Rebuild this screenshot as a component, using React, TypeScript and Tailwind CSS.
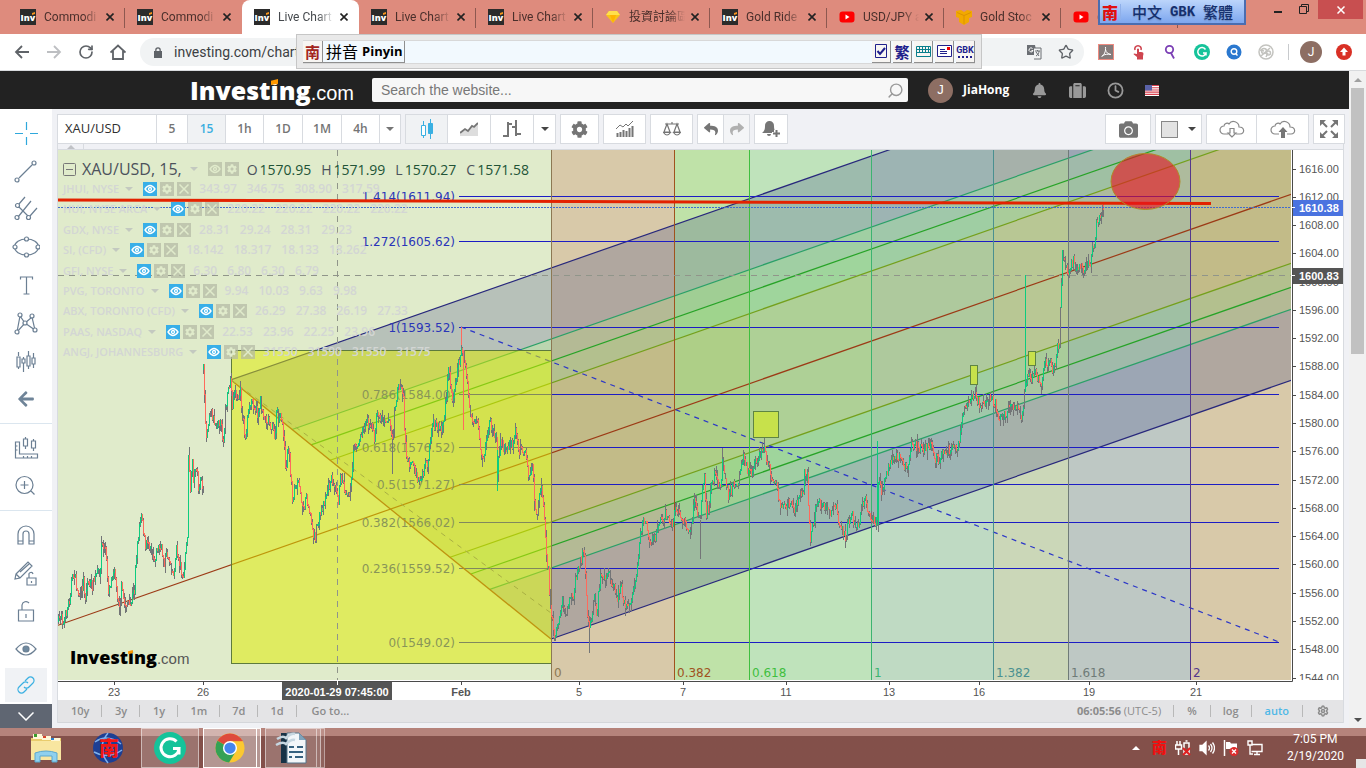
import type { ReactNode } from 'react';
import { Clock, RotateCw, Search, Settings, Star } from 'lucide-react';
import { FaArrowLeft, FaBell, FaCamera, FaCog, FaReply, FaShare, FaSuitcase } from 'react-icons/fa';

const UI = "font-['Open_Sans','Noto_Sans_CJK_SC',sans-serif]";

/* ---------- chart data ---------- */

// price path in chart units, one list per uninterrupted run
const RUNS: number[][] = [
  [58, 622, 61, 613, 63, 625, 66, 612, 69, 600, 71, 582, 74, 574, 77, 592, 80, 597, 83, 581, 85, 598, 87, 582, 92, 586, 96, 575, 100, 570, 101, 545, 105, 550, 108, 590, 112, 575, 114, 565, 116, 590, 119, 603, 121, 588, 124, 605, 128, 603, 129, 610, 132, 597, 134, 590, 135, 565, 137, 545, 139, 525, 141, 510, 143, 530, 145, 550, 147, 540, 150, 545, 154, 560, 157, 548, 161, 550, 164, 562, 167, 555, 170, 562, 173, 577, 176, 550, 179, 562, 182, 575, 183, 583, 185, 555, 187, 535, 188, 460, 190, 490, 192, 465, 193, 478, 196, 465, 198, 487, 200, 483, 203, 488],
  [203, 370, 204, 400, 206, 438, 208, 420, 210, 408, 213, 420, 216, 425, 218, 417, 221, 430, 223, 440, 225, 410, 228, 393, 230, 380, 232, 405, 234, 390, 237, 400, 240, 393, 242, 415, 245, 440, 247, 420, 251, 400, 254, 405, 257, 415, 260, 402, 264, 418, 268, 420, 272, 430, 275, 438, 276, 410, 278, 418, 281, 420, 283, 432, 285, 472, 288, 445, 290, 470, 292, 500, 294, 490, 298, 485, 301, 500, 304, 505, 306, 495, 309, 510, 312, 530, 315, 537, 317, 525, 321, 510, 324, 500, 327, 490, 331, 480, 335, 482, 338, 500, 340, 480, 342, 478, 344, 490, 348, 492, 350, 490, 352, 470, 354, 440, 357, 447, 359, 442, 362, 430, 366, 420, 370, 425, 374, 438, 377, 410, 380, 420, 384, 418, 389, 420, 392, 440, 395, 402, 398, 388, 401, 386, 403, 400, 404, 430, 407, 465, 412, 458, 415, 475, 418, 480, 422, 478, 425, 465, 428, 460, 430, 440, 433, 425, 437, 425, 441, 430, 444, 415, 446, 398, 448, 368, 450, 385, 452, 402, 454, 385, 457, 370, 460, 355, 463, 348, 465, 370, 467, 382, 468, 400, 470, 415, 473, 422, 477, 422, 480, 455, 483, 462, 486, 440, 489, 420, 492, 430, 496, 440, 497, 472, 500, 440, 504, 450, 508, 445, 512, 445, 515, 430, 518, 450, 521, 450, 525, 455, 529, 480, 532, 465, 534, 500, 537, 520, 539, 490, 541, 490, 544, 520, 546, 560, 548, 570, 550, 610, 552, 620, 554, 636, 558, 622, 562, 600, 565, 615, 568, 610, 570, 595, 572, 602, 576, 575, 580, 560, 584, 552, 585, 575, 587, 620, 589, 630, 592, 615, 594, 592, 596, 618, 599, 585, 601, 572, 604, 575, 608, 575, 612, 585, 615, 590, 617, 598, 621, 585, 623, 602, 629, 608, 632, 595, 637, 565, 640, 530, 644, 520, 647, 530, 649, 543, 652, 535, 655, 540, 658, 525, 662, 518, 666, 515, 668, 520, 672, 525, 674, 510, 678, 515, 684, 520, 687, 535, 691, 525, 694, 502, 697, 512, 700, 520, 702, 490, 704, 480, 706, 515, 709, 505, 712, 480, 715, 473, 720, 490, 722, 463, 725, 478, 728, 495, 731, 490, 734, 485, 737, 488, 740, 475, 743, 460, 746, 467, 750, 475, 754, 465, 758, 460, 762, 450, 765, 452, 767, 465, 771, 475, 776, 485, 779, 500, 782, 507, 786, 505, 790, 503, 794, 512, 797, 500, 800, 495, 803, 490, 804, 470, 807, 478, 808, 510, 810, 538, 813, 520, 817, 505, 822, 505, 826, 505, 829, 515, 832, 508, 836, 507, 839, 525, 842, 530, 845, 540, 848, 520, 852, 515, 855, 530, 859, 525, 862, 500, 865, 502, 868, 515, 872, 522, 877, 520, 878, 482, 882, 493, 886, 475, 890, 465, 895, 455, 900, 460, 904, 465, 908, 468, 911, 444, 915, 447, 920, 450, 926, 450, 931, 443, 935, 458, 939, 460, 942, 455, 947, 450, 952, 450, 957, 450, 960, 430, 963, 408, 966, 410, 970, 398, 976, 396, 980, 408, 985, 403, 990, 400, 995, 405, 998, 415, 1002, 418, 1008, 410, 1014, 408, 1018, 412, 1022, 415, 1024, 395, 1027, 378, 1030, 378, 1034, 374, 1038, 380, 1041, 385, 1044, 365, 1048, 362, 1052, 368, 1055, 370, 1057, 342, 1059, 350, 1060, 310, 1061, 280, 1062, 252, 1064, 262, 1067, 275, 1070, 268, 1073, 262, 1076, 272, 1080, 265, 1083, 270, 1087, 268, 1090, 262, 1092, 250, 1094, 245, 1096, 226, 1098, 225, 1100, 215, 1103, 208],
];

function buildCandles() {
  let wicks = '';
  let up = '';
  let down = '';
  let seed = 7;
  const rand = () => {
    seed = (seed * 16807) % 2147483647;
    return seed / 2147483647;
  };
  for (const run of RUNS) {
    let open = run[1];
    let k = 0;
    for (let x = run[0]; x <= run[run.length - 2]; x += 1) {
      while (k < run.length - 4 && run[k + 2] < x) k += 2;
      const t = (x - run[k]) / (run[k + 2] - run[k] || 1);
      const close = run[k + 1] + (run[k + 3] - run[k + 1]) * t + (rand() - 0.5) * 11;
      const high = Math.min(open, close) - rand() * rand() * 10;
      const low = Math.max(open, close) + rand() * rand() * 10;
      wicks += `M${x + 0.5} ${Math.round(high)}V${Math.round(low)}`;
      // some columns keep only their wick, so bodies read as separate bars
      if (rand() > 0.12) {
        const top = Math.round(Math.min(open, close));
        const body = `M${x + 0.5} ${top - 1}V${Math.max(Math.round(Math.max(open, close)), top + 1)}`;
        if (close < open) up += body;
        else down += body;
      }
      open = close;
    }
  }
  return { wicks, up, down };
}

const CANDLES = buildCandles();

const ZONES = [
  { x: 58, w: 493, fill: '#e0ebcb' },
  { x: 551, w: 123, fill: '#d8c9a9', line: '#8c7853', label: '0' },
  { x: 674, w: 75, fill: '#bfe2a8', line: '#a0521e', label: '0.382' },
  { x: 749, w: 122, fill: '#bfe3bb', line: '#3fbf3f', label: '0.618' },
  { x: 871, w: 122, fill: '#bfdac3', line: '#3cb371', label: '1' },
  { x: 993, w: 75, fill: '#cbd7b8', line: '#4a9090', label: '1.382' },
  { x: 1068, w: 122, fill: '#bec8c4', line: '#6f7b78', label: '1.618' },
  { x: 1190, w: 102, fill: '#d8c9a9', line: '#54388c', label: '2' },
];

// pitchfork levels, given by their height at x = 551
const SLOPE = 0.3495;
const levelY = (d: number, x: number) => d + SLOPE * (551 - x);
const levelStart = (d: number) => (d - 0.8) / 1.158;

const FORK = [
  { d: 268, color: '#28287c', band: 'rgba(35,45,125,.22)' },
  { d: 339, color: '#2ba068', band: 'rgba(40,130,70,.2)' },
  { d: 361, color: '#27a327', band: 'rgba(35,160,35,.2)' },
  { d: 383, color: '#74a01c', band: 'rgba(110,135,5,.2)' },
  { d: 453, color: '#9c3a16', band: 'rgba(110,135,5,.2)' },
  { d: 522, color: '#74a01c', band: 'rgba(35,160,35,.2)' },
  { d: 546, color: '#27a327', band: 'rgba(40,130,70,.2)' },
  { d: 568, color: '#2ba068', band: 'rgba(35,45,125,.22)' },
  { d: 639, color: '#28287c', band: '' },
];

const FIBS: [string, number][] = [
  ['1.414(1611.94)', 196],
  ['1.272(1605.62)', 241],
  ['1(1593.52)', 327],
  ['0.786(1584.00)', 394],
  ['0.618(1576.52)', 447],
  ['0.5(1571.27)', 484],
  ['0.382(1566.02)', 522],
  ['0.236(1559.52)', 568],
  ['0(1549.02)', 642],
];

const DATES: [string, number][] = [
  ['23', 114], ['26', 203], ['Feb', 461], ['5', 579], ['7', 683],
  ['11', 786], ['13', 889], ['16', 979], ['19', 1089], ['21', 1196],
];

const STUDIES = [
  { name: 'JHUI, NYSE', values: ['343.97', '346.75', '308.90', '317.59'] },
  { name: 'HUI, NYSE ARCA', values: ['220.22', '220.22', '220.22', '220.22'] },
  { name: 'GDX, NYSE', values: ['28.31', '29.24', '28.31', '29.23'] },
  { name: 'SI, (CFD)', values: ['18.142', '18.317', '18.133', '18.262'] },
  { name: 'GFI, NYSE', values: ['6.30', '6.80', '6.30', '6.79'] },
  { name: 'PVG, TORONTO', values: ['9.94', '10.03', '9.63', '9.98'] },
  { name: 'ABX, TORONTO (CFD)', values: ['26.29', '27.38', '26.19', '27.33'] },
  { name: 'PAAS, NASDAQ', values: ['22.53', '23.96', '22.25', '23.96'] },
  { name: 'ANGJ, JOHANNESBURG', values: ['31550', '31590', '31550', '31575'] },
];

/* ---------- small shapes ---------- */

function Caret({ className = '' }: { className?: string }) {
  return (
    <svg viewBox="0 0 8 4" className={`w-2 h-1 shrink-0 ${className}`} fill="currentColor">
      <path d="M0 0h8L4 4z" />
    </svg>
  );
}

function InvIcon() {
  return (
    <svg viewBox="0 0 16 16" className="w-4 h-4 shrink-0">
      <rect width="16" height="16" fill="#2b2b2b" />
      <text x="0.5" y="12" fontSize="9" fontWeight="800" fill="#fff" fontFamily="Open Sans">Inv</text>
      <path d="M12 4l3-1v2l-3 1z" fill="#f7941d" />
    </svg>
  );
}

function YoutubeIcon() {
  return (
    <svg viewBox="0 0 16 16" className="w-4 h-4 shrink-0">
      <rect x="0.5" y="2.5" width="15" height="11" rx="3" fill="#f00" />
      <path d="M6.5 5.5v5l4-2.5z" fill="#fff" />
    </svg>
  );
}

function GemIcon() {
  return (
    <svg viewBox="0 0 16 16" className="w-4 h-4 shrink-0">
      <path d="M4 2h8l3 4-7 8-7-8z" fill="#f9c517" />
      <path d="M4 2h8l3 4H1z" fill="#ffe04d" />
      <path d="M5 6h6l-3 8z" fill="#ffb400" />
    </svg>
  );
}

function GoldBoxIcon() {
  return (
    <svg viewBox="0 0 16 16" className="w-4 h-4 shrink-0">
      <path d="M0 2l5-1 3 2 3-2 5 1v6l-3 1v4l-5 3-5-3V9L0 8z" fill="#f2a900" />
      <path d="M1 3.500l7 3 7-3M8 6.500V15" stroke="#dd9200" strokeWidth="1" fill="none" />
    </svg>
  );
}

function Logo({ dark = false }: { dark?: boolean }) {
  return (
    <span className={`flex items-baseline leading-none ${dark ? 'text-black' : 'text-white'}`}>
      <span className={`font-extrabold font-['Open_Sans',sans-serif] ${dark ? 'text-[18px]' : 'text-[25px]'}`}>
        Invest
        <span className="relative">
          i
          <svg viewBox="0 0 6 5" className={`absolute left-0 ${dark ? 'top-[5px] w-[5px] h-1' : 'top-[6px] w-[7px] h-[6px]'}`}>
            <path d="M0 1.500l6-1.500v4l-6 1z" fill="#f90" />
          </svg>
        </span>
        ng
      </span>
      <span className={`font-['Liberation_Sans',sans-serif] ${dark ? 'text-[15px] text-[#555]' : 'text-[20px]'}`}>.com</span>
    </span>
  );
}

/* ---------- browser frame ---------- */

const TABS: { title: string; icon: ReactNode; active?: boolean; line?: boolean }[] = [
  { title: 'Commodi', icon: <InvIcon />, line: true },
  { title: 'Commodi', icon: <InvIcon /> },
  { title: 'Live Chart', icon: <InvIcon />, active: true },
  { title: 'Live Chart', icon: <InvIcon />, line: true },
  { title: 'Live Chart', icon: <InvIcon />, line: true },
  { title: '投資討論區', icon: <GemIcon />, line: true },
  { title: 'Gold Ride', icon: <InvIcon />, line: true },
  { title: 'USD/JPY a', icon: <YoutubeIcon />, line: true },
  { title: 'Gold Stoc', icon: <GoldBoxIcon />, line: true },
  { title: '(', icon: <YoutubeIcon />, line: true },
];

function TabStrip() {
  return (
    <div className="h-[34px] shrink-0 flex bg-[#de8b7d] pl-2 text-[12px] text-[#4a2f2b] font-['Roboto','Noto_Sans_CJK_TC',sans-serif]">
      {TABS.map((tab, i) => (
        <div
          key={i}
          className={`w-[117px] shrink-0 flex items-center pl-3 pr-[10px] relative ${tab.active ? 'bg-white rounded-t-lg text-[#45494d]' : ''}`}
        >
          {tab.icon}
          <a
            href="#"
            className="ml-2 w-[56px] shrink-0 overflow-hidden whitespace-nowrap [mask-image:linear-gradient(to_right,#000_70%,transparent)]"
          >
            {tab.title}
          </a>
          <button aria-label="Close tab" className="ml-1.5">
            <svg viewBox="0 0 8 8" className="w-2 h-2" stroke="#222" strokeWidth="1.600">
              <path d="M0.500 0.500l7 7M7.500 0.500l-7 7" />
            </svg>
          </button>
          {tab.line && <span className="absolute right-0 top-2 w-px h-5 bg-[#8d5850]" />}
        </div>
      ))}
      <div className="ml-auto flex">
        <button aria-label="Minimize" className="w-8 h-5 flex items-center justify-center">
          <span className="w-2 h-0.5 bg-[#222] mt-1" />
        </button>
        <button aria-label="Restore" className="w-5 h-[18px] flex items-center justify-center">
          <svg viewBox="0 0 10 10" className="w-[10px] h-[10px]" fill="none" stroke="#222">
            <path d="M0.500 2.500h7v7h-7zM2.500 2.500v-2h7v7h-2" />
          </svg>
        </button>
        <button aria-label="Close window" className="ml-1 mr-[3px] w-[45px] h-[19px] bg-[#c84f50] flex items-center justify-center">
          <svg viewBox="0 0 8 8" className="w-2 h-2" stroke="#fff" strokeWidth="1.500">
            <path d="M0.500 0.500l7 7M7.500 0.500l-7 7" />
          </svg>
        </button>
      </div>
    </div>
  );
}

function AddressBar() {
  return (
    <div className="h-[37px] shrink-0 flex items-center bg-white border-b border-[#d8dadd] pl-3.5 pr-[22px] font-['Roboto',sans-serif]">
      <button aria-label="Back" className="text-[#5f6368]">
        <svg viewBox="0 0 16 16" className="w-4 h-4" fill="none" stroke="currentColor" strokeWidth="1.800"><path d="M15 8H2M8 2L2 8l6 6" /></svg>
      </button>
      <button aria-label="Forward" className="ml-4 text-[#bdbfc2]">
        <svg viewBox="0 0 16 16" className="w-4 h-4" fill="none" stroke="currentColor" strokeWidth="1.800"><path d="M1 8h13M8 2l6 6-6 6" /></svg>
      </button>
      <button aria-label="Reload" className="ml-4 text-[#5f6368]"><RotateCw size={16} strokeWidth={2.5} /></button>
      <button aria-label="Home" className="ml-4 text-[#5f6368]">
        <svg viewBox="0 0 16 16" className="w-4 h-4" fill="none" stroke="currentColor" strokeWidth="1.800"><path d="M0.500 8.500L8 1.500l7.500 7M3 7v8h10V7" /></svg>
      </button>
      <div className="ml-3.5 flex-1 h-7 rounded-full bg-[#f1f3f4] flex items-center pl-3.5 pr-2.5">
        <svg viewBox="0 0 8 11" className="w-2 h-[11px]" fill="#5f6368"><path d="M0 4h8v7H0zM1.200 4.500V3a2.800 2.800 0 0 1 5.600 0v1.500H5.500V3a1.500 1.500 0 0 0-3 0v1.500z" /></svg>
        <input
          aria-label="Address"
          defaultValue="investing.com/chart"
          className="ml-3 flex-1 bg-transparent text-[14px] text-[#3c4043] outline-none"
        />
        <svg viewBox="0 0 16 16" className="w-4 h-4" aria-hidden="true">
          <path d="M1 1h8l2 10H1z" fill="#6a6e73" />
          <path d="M8 4h7v11H8" fill="#f1f3f4" stroke="#6a6e73" />
          <path d="M6.500 4.500a2 2 0 1 0 .5 2H5.500" stroke="#fff" fill="none" />
          <path d="M9 7h5M11.500 6v1M10 12c2-1 3-3 3-5M10 8l3 4" stroke="#6a6e73" fill="none" />
        </svg>
        <Star size={16} className="ml-4 text-[#5f6368]" />
      </div>
      <div className="ml-3.5 flex items-center gap-4">
        <svg viewBox="0 0 16 16" className="w-4 h-4">
          <rect width="16" height="16" fill="#ee8a80" /><rect x="1" y="1" width="14" height="14" fill="#857b7b" />
          <path d="M3.500 12.500c2.500-1 4.500-5 4-9.500M7.500 5.500c.5 3 2.500 4.500 5.500 5M4 12c3-2 5.500-2 9-1.500" stroke="#fff" fill="none" />
        </svg>
        <svg viewBox="0 0 16 16" className="w-4 h-4" fill="#cf4550">
          <path d="M7 5v5L4 9.500c-1 .5 0 1 .5 1.500L7 13v2.500h6V12l.5-2c0-2-1.500-2-4.500-2V5q-1-1-2 0z" />
          <path d="M5 6a3.200 3.200 0 1 1 6 0" fill="none" stroke="#cf4550" strokeWidth="1.600" />
        </svg>
        <svg viewBox="0 0 16 16" className="w-4 h-4" fill="none" stroke="#7b3fb5" strokeWidth="1.800">
          <circle cx="7.500" cy="5.500" r="3.700" /><path d="M9 9l3 5.500" />
        </svg>
        <svg viewBox="0 0 16 16" className="w-4 h-4">
          <circle cx="8" cy="8" r="8" fill="#15c39a" />
          <path d="M11.500 5.500a4.200 4.200 0 1 0 .5 3.500H9M12 8.500v3" stroke="#fff" strokeWidth="1.500" fill="none" />
        </svg>
        <svg viewBox="0 0 16 16" className="w-4 h-4">
          <circle cx="8" cy="8" r="7.500" fill="#2a78cf" />
          <circle cx="8" cy="7.500" r="2.800" stroke="#fff" strokeWidth="1.400" fill="none" /><path d="M10 10l1.500 1.500" stroke="#fff" strokeWidth="1.400" />
        </svg>
        <svg viewBox="0 0 16 16" className="w-4 h-4" fill="none" stroke="#c3c3bf" strokeWidth="1.500">
          <circle cx="8" cy="8" r="7" /><circle cx="6" cy="7" r="2.500" /><circle cx="10.500" cy="9" r="2" /><path d="M3 12l9-8M8 13l2-4M2 6l4 1" />
        </svg>
      </div>
      <span className="ml-3.5 w-px h-4 bg-[#c8cacd]" />
      <span className="ml-[11px] w-[22px] h-[22px] rounded-full bg-[#8d6e63] text-white text-[12px] flex items-center justify-center">J</span>
      <button aria-label="Update browser" className="ml-3.5 -mr-2">
        <svg viewBox="0 0 16 16" className="w-4 h-4">
          <circle cx="8" cy="8" r="8" fill="#d93025" /><path d="M8 3.500L4 8h2.500v3.500h3V8H12z" fill="#fff" />
        </svg>
      </button>
    </div>
  );
}

/* ---------- input method windows floating over the browser ---------- */

const KEY = 'h-[22px] w-[19px] border-r border-b border-[#8f8f8f] bg-[#f7f5f2] flex items-center justify-center';

function PinyinWindow() {
  return (
    <div className="absolute left-[296px] top-[34px] w-[686px] h-[35px] bg-[#e9e9e9] border border-[#c6c6c6] px-1.5 flex items-center font-['Noto_Sans_CJK_SC',sans-serif]">
      <div className="w-full h-6 bg-[#f2f9fe] border-y border-[#d8d8d8] flex items-center">
        <span className="h-[22px] w-5 border-r border-b border-[#8f8f8f] bg-[#f7f5f2] text-[#a3251d] font-bold text-[15px] leading-none flex items-center justify-center">南</span>
        <span className="h-[22px] border-r border-b border-[#8f8f8f] bg-[#f2f9fe] pl-[3px] pr-px text-[16px] leading-none text-black flex items-center gap-1 whitespace-nowrap">
          拼音 <b className="font-['Open_Sans',sans-serif] text-[13px]">Pinyin</b>
        </span>
        <div className="ml-auto flex items-center gap-0.5 text-[#20208c]">
          <label className={KEY}>
            <input type="checkbox" defaultChecked aria-label="Enable input" className="sr-only" />
            <svg viewBox="0 0 12 14" className="w-3 h-3.5" fill="none" stroke="#20208c">
              <path d="M0.500 0.500h11v13H0.500z" /><path d="M2.500 7l2.500 3 5-6" strokeWidth="2" />
            </svg>
          </label>
          <button className={`${KEY} text-[15px] leading-none font-bold`}>繁</button>
          <button aria-label="Keyboard" className={KEY}>
            <svg viewBox="0 0 15 11" className="w-[15px] h-[11px]" fill="none" stroke="#0a7f8c"><path d="M0.500 0.500h14v10H0.500zM0 3.500h15M0 6.500h15M3.500 0v7M6.500 0v7M9.500 0v7M12.500 0v7" /></svg>
          </button>
          <button aria-label="Mail" className={KEY}>
            <svg viewBox="0 0 15 12" className="w-[15px] h-3"><path d="M0.500 0.500h14v11H0.500z" fill="#fff" stroke="#20208c" /><path d="M3 4.500h5M3 6.500h7M3 8.500h7" stroke="#20208c" /><path d="M10 2h3v3h-3z" fill="#e00" /></svg>
          </button>
          <button className={`${KEY} flex-col`}>
            <span className="font-['Liberation_Sans_Narrow','Roboto',sans-serif] font-bold text-[9px] leading-[12px]">GBK</span>
            <span className="w-3.5 h-0.5 border-t-2 border-dotted border-[#20208c]" />
          </button>
        </div>
      </div>
    </div>
  );
}

function EncodingWindow() {
  return (
    <div className="absolute left-[1098px] top-0 w-[148px] h-[25px] border-2 border-t-0 border-[#4a6db0] bg-linear-to-b from-[#bcd5fb] to-[#7da6ee] flex items-center font-['Noto_Sans_CJK_TC',sans-serif] text-[#15306e]">
      <span className="w-[21px] text-center text-[#e01010] text-[16px] leading-none font-black border-r border-[#8fb0ea]">南</span>
      <span className="flex-1 flex items-center justify-center gap-2 text-[15px] leading-none font-medium whitespace-nowrap text-shadow-sm">
        <span>中文</span>
        <span className="font-['Liberation_Mono',monospace] text-[14px] font-bold">GBK</span>
        <span>繁體</span>
      </span>
    </div>
  );
}

/* ---------- site header ---------- */

function SiteHeader() {
  return (
    <header className="h-[38px] shrink-0 bg-[#222] flex items-center pl-[190px] pr-4 font-['Liberation_Sans',sans-serif]">
      <a href="#" aria-label="Investing.com" className="w-[182px] shrink-0"><Logo /></a>
      <div className="w-[536px] h-6 bg-[#f7f7f7] rounded-xs flex items-center pl-[9px] pr-1">
        <input aria-label="Search" placeholder="Search the website..." className="flex-1 bg-transparent text-[14px] placeholder:text-[#777] outline-none" />
        <Search size={17} className="text-[#999] -scale-x-100" />
      </div>
      <span className="ml-5 w-[25px] h-[25px] rounded-full bg-[#8d6e63] text-white text-[13px] flex items-center justify-center">J</span>
      <a href="#" className="ml-2.5 text-[12px] font-bold text-white font-['Open_Sans',sans-serif]">JiaHong</a>
      <div className="ml-5 flex items-center text-[#999]">
        <FaBell size={15} className="ml-[3px]" />
        <FaSuitcase size={17} className="ml-[22px]" />
        <Clock size={17} className="ml-[21px]" strokeWidth={2.5} />
        <svg viewBox="0 0 14 10" className="ml-[21px] w-[14px] h-[11px]" preserveAspectRatio="none">
          <rect width="14" height="10" fill="#fff" />
          <path d="M0 0.500h14M0 2.500h14M0 4.500h14M0 6.500h14M0 8.500h14" stroke="#d8414f" />
          <rect width="7" height="5" fill="#5a62a8" />
        </svg>
      </div>
    </header>
  );
}

/* ---------- drawing tools ---------- */

const DRAW_TOP: { name: string; art: ReactNode }[] = [
  { name: 'Crosshair', art: <path d="M14.500 3v8M14.500 18v8M3 14.500h8M18 14.500h8" stroke="#2fa8dc" /> },
  { name: 'Trend line', art: <><circle cx="5" cy="23" r="2" /><circle cx="22" cy="6" r="2" /><path d="M7 21L20 8" /></> },
  { name: 'Pitchfork', art: <><path d="M7 9l6-7M7 12l9 9M6 22L19 6M18 21l7-8" /><circle cx="5.500" cy="10.500" r="2" /><circle cx="5" cy="22.500" r="2" /><circle cx="16.500" cy="22.500" r="2" /></> },
  { name: 'Ellipse', art: <><ellipse cx="14.500" cy="14" rx="12" ry="8" /><g fill="#fff"><circle cx="3" cy="14" r="2" /><circle cx="26" cy="14" r="2" /><circle cx="14.500" cy="6" r="2" /><circle cx="14.500" cy="22" r="2" /></g></> },
  { name: 'Text', art: <path d="M8.500 8.500V6h12v2.500M14.500 6v17M11.500 23h6" /> },
  { name: 'Pattern', art: <><path d="M5 23L8 7l5 7 7-6 3 13-10-7z" /><g fill="#fff"><circle cx="5" cy="23" r="2" /><circle cx="8" cy="6" r="2" /><circle cx="13" cy="14" r="2" /><circle cx="20" cy="7" r="2" /><circle cx="23" cy="21" r="2" /></g></> },
  { name: 'Forecast', art: <path d="M6.500 5v4M6.500 20v2M5 10h3v10h-3zM11.500 10v2M11.500 16v9M10 12h3v4h-3zM16.500 4v5M16.500 19v3M15 9h3v10h-3zM21.500 6v5M21.500 17v4M20 11h3v6h-3z" /> },
];

const DRAW_MID: { name: string; art: ReactNode }[] = [
  { name: 'Measure', art: <path d="M3.500 8h4v12h18v4h-22zM3.500 12h2M3.500 16h2M11.500 22v2M15.500 22v2M19.500 22v2M13.500 3v2M13.500 12v3M11.500 5h4v7h-4zM21.500 5v2M21.500 14v3M19.500 7h4v7h-4z" /> },
  { name: 'Zoom in', art: <><circle cx="12.500" cy="13" r="8.500" /><path d="M19 19l3.500 3.500M8.500 13h8M12.500 9v8" /></> },
];

const DRAW_LOW: { name: string; art: ReactNode }[] = [
  { name: 'Magnet', art: <path d="M6 23V13a8 8 0 0 1 16 0v10h-5V13a3 3 0 0 0-6 0v10zM6 20h5M17 20h5" /> },
  { name: 'Lock drawings', art: <path d="M4 15L16 3l4 4L8 19l-5 1zM4 15l4 4M8 13l9-8M15 19h9v7h-9zM17 19v-3a2 2 0 0 1 4-1M19.500 22v2" /> },
  { name: 'Unlock', art: <path d="M6.500 13h15v11h-15zM10 13V8a4 4 0 0 1 7-2M14 17v4" /> },
  { name: 'Hide drawings', art: <><path d="M4 14q10-12 20 0q-10 12-20 0z" /><circle cx="14" cy="14" r="3" fill="#6f8aa0" /></> },
];

function DrawButton({ name, children }: { name: string; children: ReactNode }) {
  return (
    <button aria-label={name} className="w-full h-[38px] flex items-center justify-center">
      <svg viewBox="0 0 28 28" className="w-7 h-7" fill="none" stroke="#6b7f93" strokeWidth="1.200">{children}</svg>
    </button>
  );
}

function DrawingTools() {
  return (
    <aside className="w-[52px] shrink-0 bg-white pt-[5px] flex flex-col">
      {DRAW_TOP.map((t) => <DrawButton key={t.name} name={t.name}>{t.art}</DrawButton>)}
      <button aria-label="Arrow" className="h-[38px] flex items-center justify-center text-[#6f8498]"><FaArrowLeft size={18} /></button>
      <div className="my-[5px] h-px bg-[#dbe6ef]" />
      {DRAW_MID.map((t) => <DrawButton key={t.name} name={t.name}>{t.art}</DrawButton>)}
      <div className="my-[5px] h-px bg-[#dbe6ef]" />
      {DRAW_LOW.map((t) => <DrawButton key={t.name} name={t.name}>{t.art}</DrawButton>)}
      <button aria-label="Link" className="mx-[5px] h-[34px] bg-[#f0f2f5] flex items-center justify-center">
        <svg viewBox="0 0 18 18" className="w-[18px] h-[18px]" fill="none" stroke="#3ab0e2" strokeWidth="1.200">
          <path d="M8 5l3-3a3.300 3.300 0 0 1 5 5l-4 4a3.300 3.300 0 0 1-5 0M10 13l-3 3a3.300 3.300 0 0 1-5-5l4-4a3.300 3.300 0 0 1 5 0" />
        </svg>
      </button>
      <button aria-label="More tools" className="mt-auto h-6 bg-[#5f6672] flex items-center justify-center">
        <svg viewBox="0 0 16 9" className="w-4 h-[9px]" fill="none" stroke="#fff" strokeWidth="1.500"><path d="M0.500 0.500L8 8l7.500-7.500" /></svg>
      </button>
    </aside>
  );
}

/* ---------- chart toolbar ---------- */

const BOX = 'h-[30px] flex bg-white border border-[#d8dbe0] divide-x divide-[#d8dbe0] text-[#757575]';
const CELL = 'flex items-center justify-center';

const RANGES = [
  { label: '5', width: 'w-[31px]' },
  { label: '15', width: 'w-[38px]', on: true },
  { label: '1h', width: 'w-[38px]' },
  { label: '1D', width: 'w-[39px]' },
  { label: '1M', width: 'w-[39px]' },
  { label: '4h', width: 'w-[38px]' },
];

function CloudIcon({ up = false }: { up?: boolean }) {
  return (
    <svg viewBox="0 0 26 18" className="w-[26px] h-[18px]" fill="none" stroke="#888" strokeWidth="1.200">
      <path d="M9 14H5a4 4 0 0 1 0-8c0-3 4-3.500 5-2 3-5 10-2 10 3 6 0 6 7 1 7h-4" />
      {up ? <path d="M13 7l-4.500 5H11v6h4v-6h2.500z" fill="#777" stroke="none" /> : <path d="M13 17l-4-4h2V8.500h4V13h2z" />}
    </svg>
  );
}

function ChartToolbar() {
  return (
    <div className={`h-[35px] shrink-0 pt-[5px] flex items-start gap-1 ${UI}`}>
      <div className={`${BOX} text-[12px] text-[#4a4a4a] font-semibold`}>
        <button className="w-[99px] text-left pl-[7px] text-[13px] font-normal text-[#2f2f2f]">XAU/USD</button>
        {RANGES.map((r) => (
          <button key={r.label} className={`${r.width} ${r.on ? 'bg-[#f0f2f4] text-[#3aaee0]' : ''}`}>{r.label}</button>
        ))}
        <button aria-label="More intervals" className={`${CELL} w-5`}><Caret /></button>
      </div>
      <div className={BOX}>
        <button aria-label="Candles" className={`${CELL} w-[42px] bg-[#f0f2f4]`}>
          <svg viewBox="0 0 14 20" className="w-3.5 h-5" stroke="#3ab0e2"><path d="M3.500 2v17M10.500 0v20" /><path d="M1.500 6.500h4v10h-4z" fill="#fff" /><path d="M8.500 4.500h4v10h-4z" fill="#3ab0e2" /></svg>
        </button>
        <button aria-label="Area" className={`${CELL} w-[43px]`}>
          <svg viewBox="0 0 18 14" className="w-[18px] h-3.5"><path d="M0 12l5-4 3 2 4-5 2 1 4-5v13H0z" fill="#ddd" /><path d="M0 11l5-4 3 2 4-5 2 1 4-4" fill="none" stroke="#757575" strokeWidth="1.800" /></svg>
        </button>
        <button aria-label="Bars" className={`${CELL} w-[43px]`}>
          <svg viewBox="0 0 18 18" className="w-[18px] h-[18px]" fill="none" stroke="#757575" strokeWidth="2"><path d="M5 2v15M0 16h5M5 4h4M13 0v16M9 7h4M13 14h5" /></svg>
        </button>
        <button aria-label="More styles" className={`${CELL} w-[21px] text-[#444]`}><Caret /></button>
      </div>
      <div className={BOX}><button aria-label="Settings" className={`${CELL} w-[37px]`}><FaCog size={17} /></button></div>
      <div className={BOX}>
        <button aria-label="Indicators" className={`${CELL} w-[41px]`}>
          <svg viewBox="0 0 18 16" className="w-[18px] h-4" fill="none" stroke="#757575"><path d="M1.500 16v-4M4.500 16v-5M7.500 16V9M10.500 16v-6M13.500 16V7M16.500 16V5" strokeWidth="2" /><path d="M0 8l4-4 3 2 3-3 2 2 5-5" /></svg>
        </button>
      </div>
      <div className={BOX}>
        <button aria-label="Compare" className={`${CELL} w-[41px]`}>
          <svg viewBox="0 0 18 15" className="w-[18px] h-[15px]" fill="none" stroke="#757575" strokeWidth="1.200"><path d="M2 2h14M9 0v2M4 2L1 10h6zM14 2l-3 8h6z" /><path d="M0.500 10.500q3.500 5 7 0zM10.500 10.500q3.500 5 7 0z" /></svg>
        </button>
      </div>
      <div className={BOX}>
        <button aria-label="Undo" className={`${CELL} w-[26px]`}><FaReply size={14} /></button>
        <button aria-label="Redo" className={`${CELL} w-[25px] bg-[#f4f5f7] text-[#b0b0b0]`}><FaShare size={14} /></button>
      </div>
      <div className={BOX}>
        <button aria-label="Add alert" className={`${CELL} w-8`}>
          <svg viewBox="0 0 19 17" className="w-[19px] h-[17px]"><path d="M8 0a5 5 0 0 1 4 5c0 4 1 5 3 7H0c2-2 3-3 3-7a5 5 0 0 1 4-5zM5 13h4a2 2 0 0 1-4 0z" fill="#757575" /><path d="M14 9v8M10 13h8" stroke="#fff" strokeWidth="4" /><path d="M14.500 9v7M11 12.500h7" stroke="#757575" strokeWidth="2" /></svg>
        </button>
      </div>
      <div className="ml-auto mr-1 flex gap-1">
        <div className={BOX}><button aria-label="Snapshot" className={`${CELL} w-11`}><FaCamera size={19} /></button></div>
        <div className={BOX}>
          <button aria-label="Layout" className={`${CELL} w-[45px] gap-2.5 text-[#444]`}><span className="w-[17px] h-[17px] bg-[#e3e3e3] border border-[#888]" /><Caret /></button>
        </div>
        <div className={BOX}>
          <button aria-label="Load" className={`${CELL} w-[50px]`}><CloudIcon /></button>
          <button aria-label="Save" className={`${CELL} w-[51px]`}><CloudIcon up /></button>
        </div>
        <div className={BOX}>
          <button aria-label="Fullscreen" className={`${CELL} w-[30px]`}>
            <svg viewBox="0 0 18 18" className="w-[18px] h-[18px]" fill="#757575" stroke="#757575" strokeWidth="2">
              <path d="M2 2l5 5M16 2l-5 5M2 16l5-5M16 16l-5-5" /><path stroke="none" d="M0 0h6L0 6zM18 0v6l-6-6zM0 18v-6l6 6zM18 18h-6l6-6z" />
            </svg>
          </button>
        </div>
      </div>
    </div>
  );
}

/* ---------- chart ---------- */

function PriceChart() {
  return (
    <svg viewBox="58 150 1285 550" preserveAspectRatio="xMinYMin" className="block w-full h-full" role="img" aria-label="XAU/USD 15 minute chart">
      <rect x="58" y="150" width="1285" height="550" fill="#fff" />
      <defs>
        <clipPath id="plot"><rect x="58" y="150" width="1233" height="530" /></clipPath>
      </defs>
      <g clipPath="url(#plot)" fontFamily="DejaVu Sans, sans-serif" fontSize="12">
        {ZONES.map((z) => <rect key={z.x} x={z.x} y="150" width={z.w} height="530" fill={z.fill} shapeRendering="crispEdges" />)}
        {FORK.slice(0, -1).map((f, i) => {
          const n = FORK[i + 1].d;
          return (
            <polygon
              key={f.d}
              fill={f.band}
              points={`${levelStart(f.d)},${levelY(f.d, levelStart(f.d))} 1292,${levelY(f.d, 1292)} 1292,${levelY(n, 1292)} ${levelStart(n)},${levelY(n, levelStart(n))}`}
            />
          );
        })}
        {FORK.map((f) => {
          const x = f.d === 453 ? 58 : levelStart(f.d);
          return <line key={f.d} x1={x} y1={levelY(f.d, x)} x2="1292" y2={levelY(f.d, 1292)} stroke={f.color} strokeWidth="1.200" />;
        })}
        {FIBS.map(([label, y]) => (
          <g key={label}>
            <line x1="459" x2="1279" y1={y + 0.5} y2={y + 0.5} stroke="#1c1cc4" />
            <text x="455" y={y + 5} textAnchor="end" fill="#2a35b8">{label}</text>
          </g>
        ))}
        <path d="M461 327L1279 642" stroke="#2a35c8" strokeWidth="1.200" strokeDasharray="5 5" />
        <rect x="231.500" y="350.500" width="320" height="313" fill="rgba(222,235,0,.52)" stroke="#5d7a3c" />
        <path d="M231 380L551 639" stroke="#bf9410" strokeWidth="1.300" />
        <path d="M231 380L551 613" stroke="#a9b043" strokeDasharray="5 5" />
        {ZONES.slice(1).map((z) => (
          <g key={z.x}>
            <line x1={z.x + 0.5} x2={z.x + 0.5} y1="150" y2="680" stroke={z.line} />
            <text x={z.x + 3} y="677" fill={z.line}>{z.label}</text>
          </g>
        ))}
        <path d="M337.500 150V680M58 275.500H1292" stroke="#90958a" strokeDasharray="6 5" />
        <g fill="#c7e14b" stroke="#5f8443">
          <rect x="753.500" y="411.500" width="25" height="26" />
          <rect x="970.500" y="365.500" width="7" height="19" />
          <rect x="1028.500" y="351.500" width="7" height="14" />
        </g>
        <g shapeRendering="crispEdges">
          <path d={CANDLES.wicks} stroke="#737577" />
          <path d="M461.500 330V348M700.500 520V559M722.500 448V470M392.500 430V474M589.500 625V653" stroke="#737577" />
          <path d={CANDLES.up} stroke="#0dcc7e" />
          <path d={CANDLES.down} stroke="#ff6a5c" />
          <path d="M877.500 441V520M1025.500 275V392M497.500 450V491" stroke="#0dcc7e" />
          <path d="M461.500 327V345M463.500 350V430" stroke="#ff6a5c" />
        </g>
        <path d="M58 207.500H1292" stroke="#3f6bd0" strokeDasharray="2 1" />
        <path d="M58 200L1211 203.500" stroke="#e32200" strokeWidth="3" />
        <ellipse cx="1145.500" cy="181.500" rx="34.500" ry="28" fill="rgba(232,20,30,.62)" stroke="#b08a28" />
      </g>

      {/* price axis */}
      <path d="M1292.500 150V681.500H58" fill="none" stroke="#4a4a4a" />
      <clipPath id="axis"><rect x="1290" y="150" width="53" height="530" /></clipPath>
      <g fontFamily="Liberation Sans, sans-serif" fontSize="11" fill="#555" clipPath="url(#axis)">
        {Array.from({ length: 19 }, (_, i) => {
          const y = Math.round(168.5 + i * 28.28);
          return (
            <g key={i}>
              <path d={`M1292 ${y + 0.5}h4`} stroke="#4a4a4a" />
              <text x="1299" y={y + 4}>{(1616 - i * 4).toFixed(2)}</text>
            </g>
          );
        })}
        <rect x="1293" y="200" width="50" height="16" fill="#4a73e0" />
        <rect x="1293" y="268" width="50" height="16" fill="#555" />
        <g fill="#fff" fontWeight="700">
          <path d="M1292 207.500h3M1292 275.500h3" stroke="#fff" />
          <text x="1299" y="212">1610.38</text>
          <text x="1299" y="280">1600.83</text>
        </g>
      </g>

      {/* time axis */}
      <g fontFamily="Liberation Sans, sans-serif" fontSize="11" fill="#555" textAnchor="middle">
        {DATES.map(([label, x]) => (
          <g key={label}>
            <path d={`M${x + 0.5} 682v3`} stroke="#4a4a4a" />
            <text x={x} y="696" fontWeight={label === 'Feb' ? 700 : 400}>{label}</text>
          </g>
        ))}
        <rect x="282" y="682" width="110" height="18" fill="#555" />
        <path d="M337.500 681v4" stroke="#fff" />
        <text x="337" y="696" fill="#fff" fontWeight="700">2020-01-29 07:45:00</text>
      </g>
    </svg>
  );
}

function EyeGlyph() {
  return (
    <svg viewBox="0 0 14 14" className="w-3.5 h-3.5" fill="none" stroke="currentColor" strokeWidth="1.300">
      <path d="M2 7q5-7 10 0q-5 7-10 0z" /><circle cx="7" cy="7" r="1.500" />
    </svg>
  );
}

function StudyButtons({ removable = true, on = true }: { removable?: boolean; on?: boolean }) {
  return (
    <span className="flex gap-[3px] text-[#e0ebcb]">
      <button aria-label="Toggle visibility" className={`w-3.5 h-3.5 ${on ? 'bg-[#38afe8] text-white' : 'bg-[#c1c9af]'}`}><EyeGlyph /></button>
      <button aria-label="Format" className="w-3.5 h-3.5 bg-[#b2b8a2]/70 flex items-center justify-center"><FaCog size={10} /></button>
      {removable && (
        <button aria-label="Remove" className="w-3.5 h-3.5 bg-[#b2b8a2]/70 flex items-center justify-center">
          <svg viewBox="0 0 10 10" className="w-2.5 h-2.5" stroke="currentColor" strokeWidth="1.500"><path d="M0.500 0.500l9 9M9.500 0.500l-9 9" /></svg>
        </button>
      )}
    </span>
  );
}

function Legend() {
  return (
    <div className={`absolute left-[5px] top-[7px] ${UI}`}>
      <div className="h-6 flex items-center text-[#4c525c]">
        <svg viewBox="0 0 13 13" className="w-[13px] h-[13px]" fill="none" stroke="#777"><rect x="0.500" y="0.500" width="12" height="12" rx="1" /><path d="M3 6.500h7" /></svg>
        <span className="ml-1.5 text-[16px] whitespace-nowrap">XAU/USD, 15,</span>
        <Caret className="ml-2 mr-2.5 text-[#c3c9c0]" />
        <StudyButtons removable={false} on={false} />
        <dl className="ml-2 flex gap-2.5 text-[14px]">
          {[['O', '1570.95'], ['H', '1571.99'], ['L', '1570.27'], ['C', '1571.58']].map(([k, v]) => (
            <div key={k} className="flex gap-0.5"><dt>{k}</dt><dd className="text-[#225437]">{v}</dd></div>
          ))}
        </dl>
      </div>
      <ul className="mt-px h-[177px] flex flex-col justify-between text-[11px] leading-[14px] font-semibold text-[#d3d6d4]">
        {STUDIES.map((s) => (
          <li key={s.name} className="flex items-center whitespace-nowrap">
            {s.name}
            <Caret className="ml-1.5 mr-2.5 text-[#c3c9c0]" />
            <StudyButtons />
            <span className="ml-2 flex gap-2.5 text-[12px]">{s.values.map((v, i) => <span key={i}>{v}</span>)}</span>
          </li>
        ))}
      </ul>
    </div>
  );
}

function RangeBar() {
  return (
    <div className={`h-[23px] shrink-0 bg-[#e4e4e6] border-b border-[#d4d6da] flex items-center text-[11px] font-semibold text-[#8c8c8c] ${UI}`}>
      <div className="pl-px flex items-center divide-x divide-[#b8b8b8] leading-3">
        {['10y', '3y', '1y', '1m', '7d', '1d'].map((r) => <button key={r} className="px-3 min-w-[38px]">{r}</button>)}
        <button className="pl-[15px] pr-3">Go to...</button>
      </div>
      <div className="ml-auto flex items-center divide-x divide-[#b8b8b8] leading-3">
        <span className="pr-3"><b className="font-bold">06:05:56</b> <span className="font-normal">(UTC-5)</span></span>
        <button className="px-[13px]">%</button>
        <button className="px-3">log</button>
        <button className="px-[13px] text-[#4fb8e6]">auto</button>
        <button aria-label="Scale settings" className="px-3.5"><Settings size={12} strokeWidth={3} /></button>
      </div>
    </div>
  );
}

function ScrollBar() {
  return (
    <div className="w-[17px] shrink-0 bg-[#f1f1f1] flex flex-col items-center">
      <span className="h-[17px] flex items-center"><Caret className="rotate-180 text-[#a0a0a0]" /></span>
      <span className="w-[13px] h-[266px] shrink-0 bg-[#c1c1c1]" />
      <span className="h-[17px] mt-auto flex items-center"><Caret className="text-[#505050]" /></span>
    </div>
  );
}

/* ---------- Windows taskbar ---------- */

function TaskBar() {
  return (
    <footer className="h-10 shrink-0 bg-linear-to-b from-[#b5837b] from-20% to-[#83504a] to-20% flex items-stretch pl-[17px] relative text-white font-['Roboto','Noto_Sans_CJK_TC',sans-serif]">
      <button aria-label="File Explorer" className="w-[58px] flex items-center justify-center">
        <svg viewBox="0 0 32 32" className="w-8 h-8">
          <path d="M1 6h30v22H1z" fill="#e9cc6c" /><path d="M3 2h9v5H3zM12 4h9v4h-9zM21 6h9v4h-9z" fill="#fff7d6" />
          <path d="M4 2h3v3H4z" fill="#3a9c2c" /><path d="M13 4h3v2h-3z" fill="#d8452a" /><path d="M21 6h3v2h-3z" fill="#2a7fd0" />
          <path d="M1 9h30v19H1z" fill="#f8e6a0" /><path d="M5 30V21q11-4 22 0v9h-5v-6H10v6z" fill="#8fd0ee" stroke="#5ba8cf" />
        </svg>
      </button>
      <button aria-label="NJStar" className="ml-1 w-[58px] flex items-center justify-center">
        <svg viewBox="0 0 32 32" className="w-8 h-8"><circle cx="16" cy="16" r="15" fill="#1d3f94" /><path d="M3 10q12-9 26 2M2 20q14 8 28-2M16 1q-12 15 0 30" stroke="#7fb0ec" strokeWidth="1.500" fill="none" /><text x="17" y="24" textAnchor="middle" fontSize="20" fontWeight="900" fill="#f11616" fontFamily="Noto Sans CJK TC">南</text></svg>
      </button>
      <button aria-label="Grammarly" className="ml-1 w-[58px] flex items-center justify-center bg-white/20 border border-white/50">
        <svg viewBox="0 0 32 32" className="w-8 h-8"><circle cx="16" cy="16" r="16" fill="#15c39a" /><path d="M22.500 9.500a9 9 0 1 0 2.500 7h-6M25 16.500v6" stroke="#fff" strokeWidth="3" fill="none" /></svg>
      </button>
      <button aria-label="Chrome" className="ml-1 w-[54px] flex items-center justify-center bg-white/40 border border-white">
        <svg viewBox="0 0 32 32" className="w-[30px] h-[30px]">
          <circle cx="16" cy="16" r="15.500" fill="#fbc831" />
          <path d="M16 16L2.600 8.200A15.500 15.500 0 0 1 29.400 8.200H16z" fill="#de4a3c" />
          <path d="M16 16L2.600 8.200A15.500 15.500 0 0 0 15 31.500L22 20z" fill="#35a155" />
          <path d="M16 8.200h13.400" stroke="#de4a3c" /><circle cx="16" cy="16" r="7.500" fill="#fff" /><circle cx="16" cy="16" r="6" fill="#4485ee" />
        </svg>
      </button>
      <span className="w-1 border-y border-r border-white/90 bg-white/40" />
      <button aria-label="Writer" className="ml-1 w-[52px] flex items-center justify-center bg-white/20 border border-white/50">
        <svg viewBox="0 0 32 32" className="w-8 h-8"><path d="M6 1h6v30H6z" fill="#173246" /><path d="M12 1h12l7 7v23H12z" fill="#f2f6f9" stroke="#55748a" /><path d="M24 1l7 7h-7z" fill="#7fa3bb" /><path d="M14 15h5M22 15h6M14 20h14M14 25h3M20 25h8" stroke="#35617f" strokeWidth="2" /><path d="M2 7q6-4 9-1q5-5 9-4M1 13q7-4 10-1q5-5 9-4" stroke="#c6d6e0" strokeWidth="2.500" fill="none" /></svg>
      </button>
      <span className="w-1 border-y border-r border-white/50 bg-white/20" />
      <span className="w-1 border-y border-r border-white/40 bg-white/10" />
      <div className="ml-auto flex items-center gap-2 pr-6">
        <Caret className="rotate-180 mr-1" />
        <span className="text-[15px] leading-none font-black text-[#f01010]">南</span>
        <svg viewBox="0 0 16 16" className="w-4 h-4" fill="none" stroke="#fff" strokeWidth="1.500"><path d="M2 1v4M5 1v4M0.500 5h6v4h-6zM3.500 9v6M9 3h5v11H9zM10.500 1h2" /><path d="M8 8l7 7M15 8l-7 7" stroke="#e02020" strokeWidth="2" /></svg>
        <svg viewBox="0 0 16 16" className="w-4 h-4" fill="none" stroke="#fff" strokeWidth="1.300"><path d="M1 5.500h2.500L7 2v12l-3.500-3.500H1z" fill="#fff" /><path d="M9.500 5.500q2 2.500 0 5M11.500 4q3 4 0 8M13.500 2.500q4 5.500 0 11" /></svg>
        <svg viewBox="0 0 16 16" className="w-4 h-4"><path d="M1.500 0v16" stroke="#fff" strokeWidth="1.500" /><path d="M3 2h4l1 1.500h6v7H8L7 9H3z" fill="#fff" /><circle cx="11" cy="11.500" r="4.500" fill="#dd2c2c" /><path d="M9 9.500l4 4M13 9.500l-4 4" stroke="#fff" strokeWidth="1.300" /></svg>
        <svg viewBox="0 0 16 16" className="w-4 h-4" fill="none" stroke="#fff" strokeWidth="1.400"><path d="M5 4.500h10v7H4.500M10 11.500v3M7 14.500h6M1 1h4v4H1zM3 5v9h3" /></svg>
        <div className="ml-4 -mr-0.5 text-center text-[12px] leading-[17px]">
          <div>7:05 PM</div>
          <div>2/19/2020</div>
        </div>
      </div>
      <span className="absolute right-0 bottom-0 w-2.5 h-[9px] bg-[#e6e6e6]" />
    </footer>
  );
}

export default function App() {
  return (
    <div className="relative h-screen flex flex-col overflow-hidden bg-[#f0f1f5]">
      <TabStrip />
      <AddressBar />
      <div className="flex-1 min-h-0 flex">
        <div className="flex-1 min-w-0 flex flex-col">
          <SiteHeader />
          <div className="flex-1 min-h-0 flex">
            <DrawingTools />
            <main className="flex-1 min-w-0 pl-[5px] flex flex-col">
              <ChartToolbar />
              <div className="mr-[5px] flex-1 min-h-0 flex flex-col border-l border-r border-[#d8dbe0]">
                <div className="h-1.5 shrink-0 border-b border-[#d8dbe0] flex">
                  <span className="w-[26px] border-r border-[#d8dbe0] flex items-center justify-center"><Caret className="rotate-180 text-[#c0c2c6]" /></span>
                </div>
                <div className="flex-1 min-h-0 relative">
                  <PriceChart />
                  <Legend />
                  <div className="absolute left-3 bottom-[34px]"><Logo dark /></div>
                </div>
                <RangeBar />
              </div>
              <div className="h-[5px] shrink-0" />
            </main>
          </div>
        </div>
        <ScrollBar />
      </div>
      <TaskBar />
      <PinyinWindow />
      <EncodingWindow />
    </div>
  );
}
